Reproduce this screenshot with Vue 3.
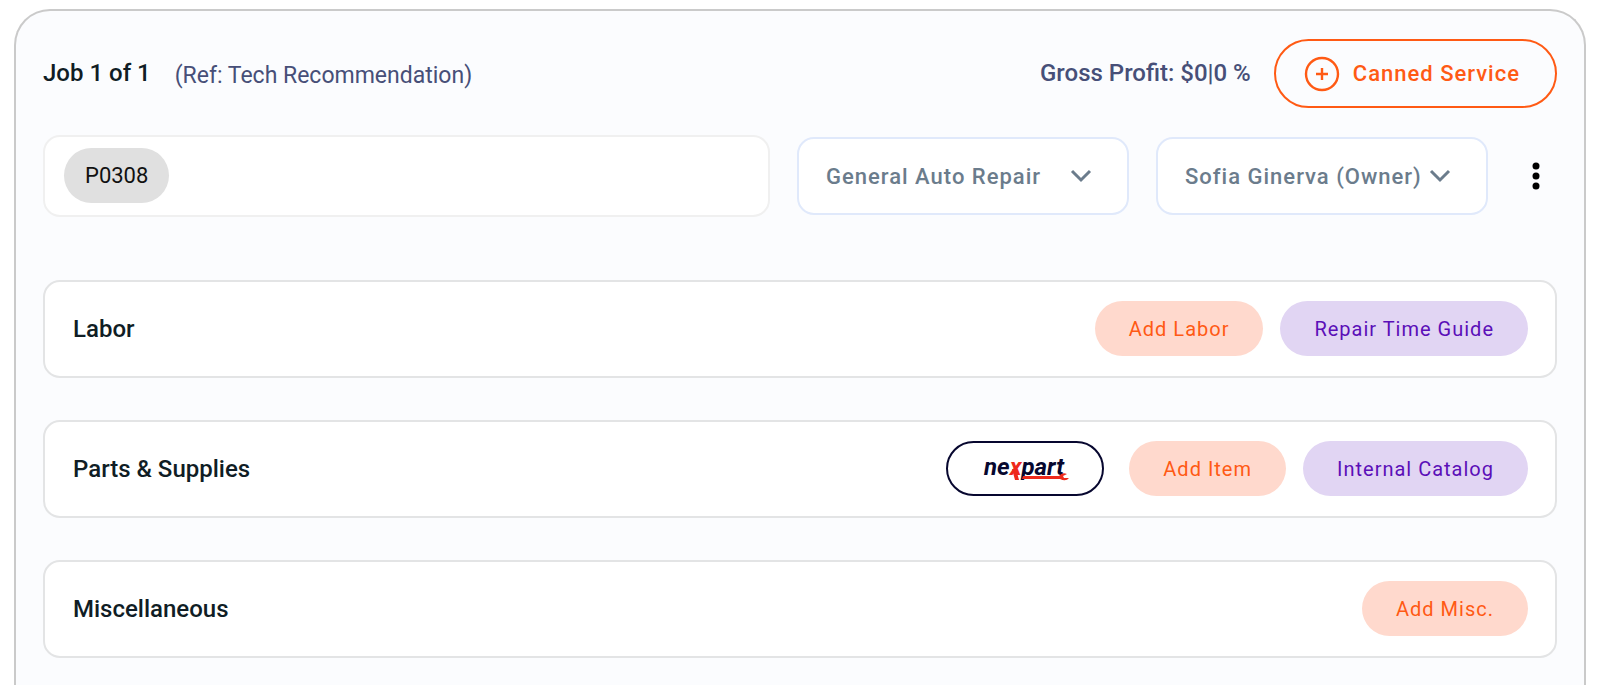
<script setup>
import { ref } from 'vue'

const category = ref('General Auto Repair')
const technician = ref('Sofia Ginerva (Owner)')
const concern = ref('')

const sections = [
  { title: 'Labor', nexpart: false, actions: [{ label: 'Add Labor', tone: 'peach' }, { label: 'Repair Time Guide', tone: 'violet' }] },
  { title: 'Parts & Supplies', nexpart: true, actions: [{ label: 'Add Item', tone: 'peach' }, { label: 'Internal Catalog', tone: 'violet' }] },
  { title: 'Miscellaneous', nexpart: false, actions: [{ label: 'Add Misc.', tone: 'peach' }] }
]
</script>

<template>
  <main class="job">
    <header class="head">
      <h1 class="title">Job 1 of 1</h1>
      <span class="reference">(Ref: Tech Recommendation)</span>
      <span class="profit">Gross Profit: $0|0 %</span>
      <button type="button" class="canned">
        <svg class="plus" viewBox="0 0 36 36" aria-hidden="true">
          <circle cx="18" cy="18" r="16" />
          <path d="M18 12v12M12 18h12" />
        </svg>
        Canned Service
      </button>
    </header>

    <div class="fields">
      <div class="concern">
        <span class="chip">P0308</span>
        <input v-model="concern" class="entry" type="text" aria-label="Job name" />
      </div>
      <div class="picker">
        <select v-model="category" class="select" aria-label="Category">
          <option>General Auto Repair</option>
        </select>
        <svg class="chevron" viewBox="0 0 22 14" aria-hidden="true"><path d="M2 2l9 9 9-9" /></svg>
      </div>
      <div class="picker">
        <select v-model="technician" class="select" aria-label="Technician">
          <option>Sofia Ginerva (Owner)</option>
        </select>
        <svg class="chevron" viewBox="0 0 22 14" aria-hidden="true"><path d="M2 2l9 9 9-9" /></svg>
      </div>
      <button type="button" class="more" aria-label="More options">
        <svg class="dots" viewBox="0 0 8 28" aria-hidden="true">
          <circle cx="4" cy="4" r="3.5" /><circle cx="4" cy="14" r="3.5" /><circle cx="4" cy="24" r="3.5" />
        </svg>
      </button>
    </div>

    <div class="sections">
      <section v-for="section in sections" :key="section.title" class="card">
        <h2 class="title">{{ section.title }}</h2>
        <div class="actions">
          <button v-if="section.nexpart" type="button" class="nexpart" aria-label="Nexpart">
            <svg class="logo" viewBox="0 0 90 40" aria-hidden="true">
              <path class="red" d="M32 20h4l3 11h-4z" />
              <text x="4" y="26" class="word">ne<tspan class="red">x</tspan>part</text>
              <path class="red" d="M43 27h36q3-4 8-2l-4 2 1 2h5q-3 4-9 1H42z" />
            </svg>
          </button>
          <button v-for="action in section.actions" :key="action.label" type="button" class="action" :class="action.tone">
            {{ action.label }}
          </button>
        </div>
      </section>
    </div>
  </main>
</template>

<style>
body {
  background: #fff;
  overflow: hidden;
}
</style>

<style scoped>
.job {
  box-sizing: border-box;
  min-height: 100vh;
  margin: 9px 14px 0;
  padding: 28px 27px 32px;
  border: 2px solid #cacaca;
  border-bottom: 0;
  border-radius: 36px 36px 0 0;
  background: #fbfcfe;
  font-family: Roboto, "Liberation Sans", sans-serif;
}
button, select, input {
  font-family: inherit;
}
button {
  cursor: pointer;
}
.head {
  display: flex;
  align-items: center;
  height: 69px;
}
.title {
  margin: 0;
  font-size: 24px;
  line-height: 32px;
  font-weight: 500;
  color: #101d25;
}
.head .title {
  padding-bottom: 2px;
}
.reference {
  margin-left: 24px;
  padding-top: 4px;
  font-size: 23px;
  line-height: 28px;
  color: #474f78;
}
.profit {
  margin-left: auto;
  padding-bottom: 2px;
  font-size: 24px;
  line-height: 32px;
  font-weight: 500;
  color: #474f78;
}
.canned {
  display: flex;
  align-items: center;
  gap: 13px;
  height: 69px;
  margin-left: 23px;
  padding: 0 35px 0 28px;
  border: 2px solid #ff5a14;
  border-radius: 35px;
  background: transparent;
  color: #ff5a14;
  font-size: 22px;
  font-weight: 500;
  letter-spacing: 1px;
}
.plus {
  width: 36px;
  height: 36px;
  fill: none;
  stroke: currentColor;
  stroke-width: 2.4;
}
.fields {
  display: flex;
  align-items: center;
  gap: 27px;
  margin-top: 27px;
}
.concern {
  box-sizing: border-box;
  flex: 1;
  display: flex;
  align-items: center;
  gap: 12px;
  min-width: 0;
  height: 82px;
  padding: 0 20px 2px 19px;
  border: 2px solid #f0f0f0;
  border-radius: 17px;
  background: #fff;
}
.chip {
  padding: 0 21px;
  border-radius: 28px;
  background: #e0e0e0;
  color: #111;
  font-size: 22px;
  line-height: 55px;
}
.entry {
  flex: 1;
  min-width: 0;
  height: 55px;
  border: 0;
  outline: 0;
  background: transparent;
  font-size: 22px;
}
.picker {
  display: grid;
  align-items: center;
  width: 332px;
}
.select, .chevron {
  grid-area: 1 / 1;
}
.select {
  appearance: none;
  width: 100%;
  height: 78px;
  padding: 0 27px;
  border: 2px solid #e0e9fb;
  border-radius: 17px;
  background: #fff;
  color: #6b7c8c;
  font-size: 22px;
  font-weight: 500;
  letter-spacing: 1px;
}
.chevron {
  justify-self: end;
  width: 22px;
  height: 14px;
  margin-right: 37px;
  fill: none;
  stroke: #6b7c8c;
  stroke-width: 3;
  pointer-events: none;
}
.more {
  display: grid;
  place-items: center;
  width: 42px;
  height: 44px;
  padding: 0;
  border: 0;
  background: transparent;
}
.dots {
  width: 8px;
  height: 28px;
}
.sections {
  display: grid;
  gap: 42px;
  margin-top: 63px;
}
.card {
  box-sizing: border-box;
  display: flex;
  align-items: center;
  justify-content: space-between;
  height: 98px;
  padding: 0 27px 1px 28px;
  border: 2px solid #e3e4e5;
  border-radius: 17px;
  background: #fff;
}
.actions {
  display: flex;
  gap: 17px;
}
.action {
  height: 55px;
  padding: 0 34px;
  border: 0;
  border-radius: 28px;
  font-size: 20px;
  letter-spacing: 1px;
}
.peach {
  background: #ffd9cd;
  color: #ff5a14;
}
.violet {
  background: #e1d5f3;
  color: #5b0fb8;
}
.nexpart {
  display: grid;
  place-items: center;
  width: 158px;
  height: 55px;
  margin-right: 8px;
  padding: 0;
  border: 2px solid #07072f;
  border-radius: 28px;
  background: #fff;
}
.logo {
  width: 90px;
  height: 40px;
}
.word {
  fill: #07072f;
  font-size: 24px;
  font-weight: 700;
  font-style: italic;
}
.red {
  fill: #ee2a1c;
}
</style>
